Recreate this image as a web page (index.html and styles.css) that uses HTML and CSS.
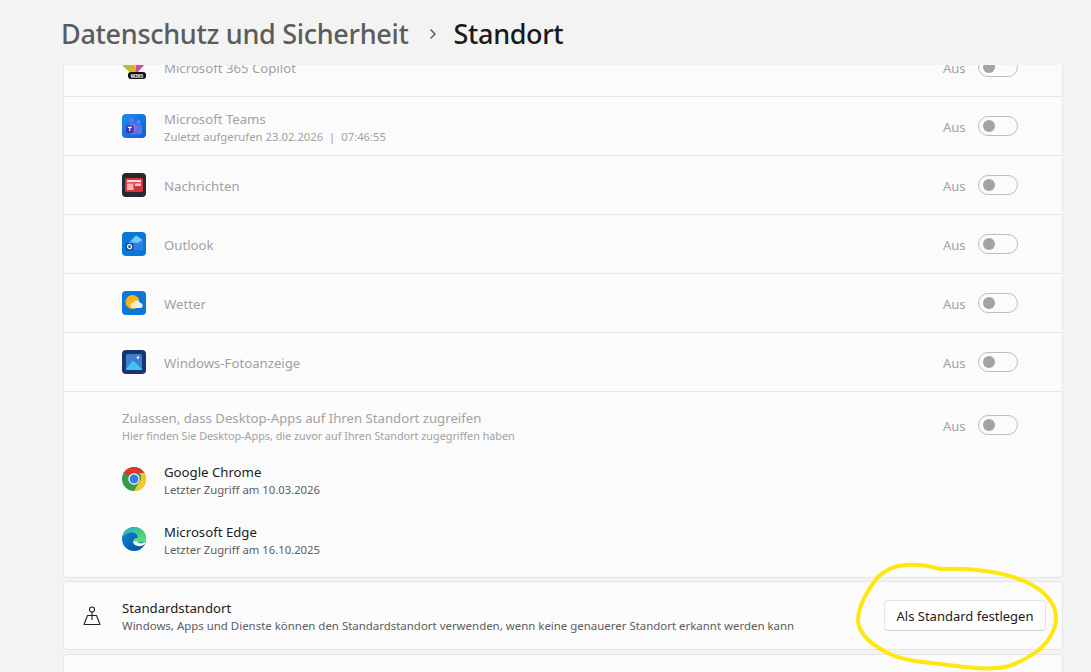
FILE: index.html
```html
<!DOCTYPE html>
<html lang="de">
<head>
  <meta charset="UTF-8">
  <title>Standort</title>
  <link rel="stylesheet" href="styles.css">
</head>
<body>
  <header class="page-header">
    <span class="crumb">Datenschutz und Sicherheit</span>
    <svg class="crumb-arrow" width="10" height="12" viewBox="0 0 10 12"><path d="M2.500 1.500 7 6l-4.500 4.500" fill="none" stroke="#555" stroke-width="1.400"/></svg>
    <span class="crumb-current">Standort</span>
  </header>

  <main class="content">
    <section class="card app-card">
      <div class="row">
        <svg class="app-icon" viewBox="0 0 24 24">
          <defs>
            <linearGradient id="copilotLeft" x1="0" y1="0" x2="1" y2="0"><stop offset="0" stop-color="#8cc63f"/><stop offset="1" stop-color="#f2b705"/></linearGradient>
            <linearGradient id="copilotRight" x1="0" y1="1" x2="1" y2="0"><stop offset="0" stop-color="#e8409a"/><stop offset="1" stop-color="#a855d8"/></linearGradient>
          </defs>
          <path d="M0 0h12l2 18H9C5 15 1 12 0 9z" fill="url(#copilotLeft)"/>
          <path d="M14 0h10v8l-9 10h-1.500z" fill="url(#copilotRight)"/>
          <rect x="6" y="17" width="18" height="7" rx="3" fill="#111"/>
          <text x="15" y="22.500" class="badge-text">M365</text>
        </svg>
        <span class="row-text"><span class="row-title">Microsoft 365 Copilot</span></span>
        <span class="state">Aus</span><span class="toggle"></span>
      </div>
      <div class="row">
        <svg class="app-icon" viewBox="0 0 24 24">
          <defs><linearGradient id="teamsBg" x1="0" y1="0" x2="1" y2="1"><stop offset="0" stop-color="#1a8df0"/><stop offset="1" stop-color="#0f5fd8"/></linearGradient></defs>
          <rect width="24" height="24" rx="4" fill="url(#teamsBg)"/>
          <circle cx="9.500" cy="6.500" r="2.500" fill="#6a6fe0"/>
          <circle cx="16.500" cy="8" r="2" fill="#5a8ce8"/>
          <rect x="14" y="10.500" width="6" height="10" rx="2.500" fill="#5a78dc"/>
          <rect x="8" y="9.500" width="6.500" height="11" rx="1.500" fill="#7a6fe0"/>
          <rect x="4" y="11.500" width="7.500" height="7.500" rx="1" fill="#3a35a8"/>
          <path d="M5.800 13.400h4M7.800 13.400v3.900" stroke="#fff" stroke-width="1.100" fill="none"/>
        </svg>
        <span class="row-text">
          <span class="row-title">Microsoft Teams</span>
          <span class="row-sub">Zuletzt aufgerufen 23.02.2026 &nbsp;|&nbsp; 07:46:55</span>
        </span>
        <span class="state">Aus</span><span class="toggle"></span>
      </div>
      <div class="row">
        <svg class="app-icon" viewBox="0 0 24 24">
          <rect width="24" height="24" rx="4" fill="#252a32"/>
          <rect x="3" y="5" width="18" height="14" rx="1.500" fill="#d8323f"/>
          <rect x="5" y="7" width="14" height="2.200" fill="#ffd6d6"/>
          <rect x="5" y="10.500" width="6.500" height="6.500" fill="#ffb3b3"/>
          <rect x="13" y="10.500" width="6" height="2.400" fill="#ffd6d6"/>
        </svg>
        <span class="row-text"><span class="row-title">Nachrichten</span></span>
        <span class="state">Aus</span><span class="toggle"></span>
      </div>
      <div class="row">
        <svg class="app-icon" viewBox="0 0 24 24">
          <rect width="24" height="24" rx="4" fill="#0a78d8"/>
          <path d="M7 10l7-6.500 6.500 4.500v10H8z" fill="#4aa8f0"/>
          <path d="M11 12l9.500-4v10H10z" fill="#2b80e0"/>
          <path d="M9 9l5-5.500 6.500 4.500-5 3z" fill="#7cc8f8"/>
          <rect x="3.500" y="11" width="8" height="7.500" rx="1" fill="#0a4fa8"/>
          <circle cx="7.500" cy="14.700" r="2" fill="none" stroke="#fff" stroke-width="1.200"/>
        </svg>
        <span class="row-text"><span class="row-title">Outlook</span></span>
        <span class="state">Aus</span><span class="toggle"></span>
      </div>
      <div class="row">
        <svg class="app-icon" viewBox="0 0 24 24">
          <rect width="24" height="24" rx="4" fill="#0a78d8"/>
          <circle cx="10.500" cy="11" r="7" fill="#f7b515"/>
          <path d="M11 17a2.600 2.600 0 0 1 .2-5.200 3.600 3.600 0 0 1 6.800.2 2.500 2.500 0 0 1 .3 5z" fill="#f4ece2"/>
        </svg>
        <span class="row-text"><span class="row-title">Wetter</span></span>
        <span class="state">Aus</span><span class="toggle"></span>
      </div>
      <div class="row">
        <svg class="app-icon" viewBox="0 0 24 24">
          <rect width="24" height="24" rx="4" fill="#16366f"/>
          <rect x="4" y="4" width="16" height="16" rx="1.500" fill="#3f7fd0"/>
          <path d="M4 19 11 10.500l9 8.500v1H4z" fill="#43c3f2"/>
          <circle cx="16" cy="7.500" r="1.300" fill="#e8f3ff"/>
        </svg>
        <span class="row-text"><span class="row-title">Windows-Fotoanzeige</span></span>
        <span class="state">Aus</span><span class="toggle"></span>
      </div>

      <div class="desktop-head">
        <span class="row-text">
          <span class="row-title">Zulassen, dass Desktop-Apps auf Ihren Standort zugreifen</span>
          <span class="row-sub head-sub">Hier finden Sie Desktop-Apps, die zuvor auf Ihren Standort zugegriffen haben</span>
        </span>
        <span class="state">Aus</span><span class="toggle"></span>
      </div>
      <div class="desktop-app">
        <svg class="app-icon" viewBox="0 0 24 24">
          <circle cx="12" cy="12" r="12" fill="#2f9e44"/>
          <path d="M12 0a12 12 0 0 1 10.400 6H12a6 6 0 0 0-5.200 3L1.600 6A12 12 0 0 1 12 0z" fill="#d93a2d"/>
          <path d="M22.400 6A12 12 0 0 1 12 24l5.200-9a6 6 0 0 0 0-9z" fill="#f8c723"/>
          <circle cx="12" cy="12" r="5.700" fill="#fff"/>
          <circle cx="12" cy="12" r="4.500" fill="#3f78e6"/>
        </svg>
        <span class="row-text">
          <span class="row-title active">Google Chrome</span>
          <span class="row-sub active">Letzter Zugriff am 10.03.2026</span>
        </span>
      </div>
      <div class="desktop-app">
        <svg class="app-icon" viewBox="0 0 24 24">
          <defs>
            <linearGradient id="edgeTop" x1="0" y1="0" x2="1" y2="1"><stop offset="0" stop-color="#2aa5d8"/><stop offset=".6" stop-color="#46c98a"/><stop offset="1" stop-color="#62dc6c"/></linearGradient>
            <linearGradient id="edgeLow" x1="0" y1="0" x2="1" y2="1"><stop offset="0" stop-color="#0c8ad8"/><stop offset="1" stop-color="#0a4a9c"/></linearGradient>
          </defs>
          <circle cx="12" cy="12" r="12" fill="url(#edgeLow)"/>
          <path d="M12 0C5.500 0 .8 5 0 11c2-3.500 6-5.500 10-5.500 3.500 0 6 2.500 5.500 5.500H24C24 5 19 0 12 0z" fill="url(#edgeTop)"/>
          <path d="M24 11v3c0 .5-.2 1-.4 1.500H11c-.3-2.500 1.500-4.500 4.500-4.500z" fill="#5cd878"/>
          <path d="M11 14.500c.3 2.800 3 4.700 6.500 4.700 2.200 0 4.200-1 5.600-2.700l.5-1.500c-1.400 1-3 1.300-4.500 1.300-2 0-3.500-.3-4-1.800z" fill="#fdfdfd"/>
          <path d="M10.500 8c-2.500 1-3.500 3-3.300 6 .3 4 3.300 8 7.800 9.600L12 24c-3-1-5-6-5-10 0-3 1-5 3.500-6z" fill="#0a5cae"/>
        </svg>
        <span class="row-text">
          <span class="row-title active">Microsoft Edge</span>
          <span class="row-sub active">Letzter Zugriff am 16.10.2025</span>
        </span>
      </div>
    </section>

    <section class="card default-card">
      <svg class="default-icon" width="20" height="22" viewBox="0 0 20 22">
        <circle cx="10" cy="3.500" r="2.500" fill="none" stroke="#222" stroke-width="1.100"/>
        <path d="M10 6v8M5.500 9.500h9L18 18.500H2z" fill="none" stroke="#222" stroke-width="1.100" stroke-linejoin="round"/>
      </svg>
      <span class="row-text">
        <span class="row-title active">Standardstandort</span>
        <span class="row-sub default-sub active">Windows, Apps und Dienste können den Standardstandort verwenden, wenn keine genauerer Standort erkannt werden kann</span>
      </span>
      <button class="default-btn" type="button">Als Standard festlegen</button>
    </section>

    <section class="card next-card"></section>
  </main>

  <svg class="marker" width="1091" height="672" viewBox="0 0 1091 672">
    <path d="M940 569C958 568 975 569 992 572 1010 575 1028 581 1040 590 1050 598 1056 608 1056 618 1056 631 1047 644 1036 652 1026 659 1012 668 996 668 980 670 958 666 940 664 920 662 900 660 886 652 872 645 858 633 858 620 858 606 868 590 877 578 884 571 892 566 905 565 917 564 930 566 940 569z"/>
  </svg>
</body>
</html>
```

FILE: styles.css
```css
* {
  box-sizing: border-box;
}

body {
  margin: 0;
  height: 672px;
  overflow: hidden;
  background: #f3f3f3;
  font-family: "Noto Sans", "Open Sans", sans-serif;
  display: flex;
  flex-direction: column;
  position: relative;
}

.page-header {
  height: 65px;
  flex-shrink: 0;
  padding: 2px 0 0 61px;
  display: flex;
  align-items: center;
  background: #f3f3f3;
  position: relative;
  z-index: 1;
}

.crumb {
  font-size: 27px;
  font-weight: 500;
  letter-spacing: -0.3px;
  color: #5c5c5c;
}

.crumb-arrow {
  margin: 0 16px 0 19px;
}

.crumb-current {
  font-size: 27px;
  font-weight: 500;
  letter-spacing: -0.35px;
  color: #1a1a1a;
}

.content {
  flex: 1;
  min-height: 0;
  padding: 0 28px 0 63px;
  display: flex;
  flex-direction: column;
  gap: 4px;
}

.card {
  background: #fbfbfb;
  border: 1px solid #e6e6e6;
  border-radius: 4px;
  flex-shrink: 0;
}

.app-card {
  margin: -28px 0 -1px;
  height: 541px;
}

.row {
  height: 59px;
  padding: 0 44px 0 58px;
  display: flex;
  align-items: center;
  border-bottom: 1px solid #e6e6e6;
}

.app-icon {
  width: 24px;
  height: 24px;
  margin-right: 18px;
  flex-shrink: 0;
}

.badge-text {
  font-family: "Liberation Sans", sans-serif;
  font-size: 5px;
  font-weight: 700;
  fill: #fff;
  text-anchor: middle;
}

.row-text {
  flex: 1;
  display: flex;
  flex-direction: column;
  min-width: 0;
  padding-top: 2px;
}

.row-title {
  font-size: 13.2px;
  line-height: 18px;
  color: #a2a2a2;
}

.row-sub {
  margin-top: 1px;
  font-size: 11.3px;
  line-height: 16px;
  color: #a2a2a2;
}

.head-sub {
  font-size: 10.8px;
}

.default-sub {
  font-size: 11.45px;
}

.row-title.active {
  color: #1c1c1c;
}

.row-sub.active {
  color: #5e5e5e;
}

.state {
  width: 23px;
  margin-right: 12px;
  padding-top: 2px;
  font-size: 13px;
  color: #a2a2a2;
}

.toggle {
  width: 40px;
  height: 20px;
  border: 1px solid #bdbdbd;
  border-radius: 10px;
  padding: 3px 4px;
  flex-shrink: 0;
}

.toggle::before {
  content: "";
  display: block;
  width: 12px;
  height: 12px;
  border-radius: 50%;
  background: #a3a3a3;
}

.desktop-head {
  height: 57px;
  padding: 9px 44px 0 58px;
  display: flex;
  align-items: center;
}

.desktop-app {
  height: 60px;
  padding-left: 58px;
  display: flex;
  align-items: center;
}

.default-card {
  height: 69px;
  padding: 0 16px 0 18px;
  display: flex;
  align-items: center;
}

.default-icon {
  margin: 2px 20px 0 0;
  flex-shrink: 0;
}

.default-btn {
  width: 162px;
  height: 31px;
  background: #fefefe;
  border: 1px solid #e4e4e4;
  border-bottom-color: #cfcfcf;
  border-radius: 4px;
  font-family: inherit;
  font-size: 13px;
  color: #1c1c1c;
}

.next-card {
  height: 40px;
}

.marker {
  position: absolute;
  left: 0;
  top: 0;
  z-index: 2;
  pointer-events: none;
}

.marker path {
  fill: none;
  stroke: #ffe60f;
  stroke-width: 4;
}
```
